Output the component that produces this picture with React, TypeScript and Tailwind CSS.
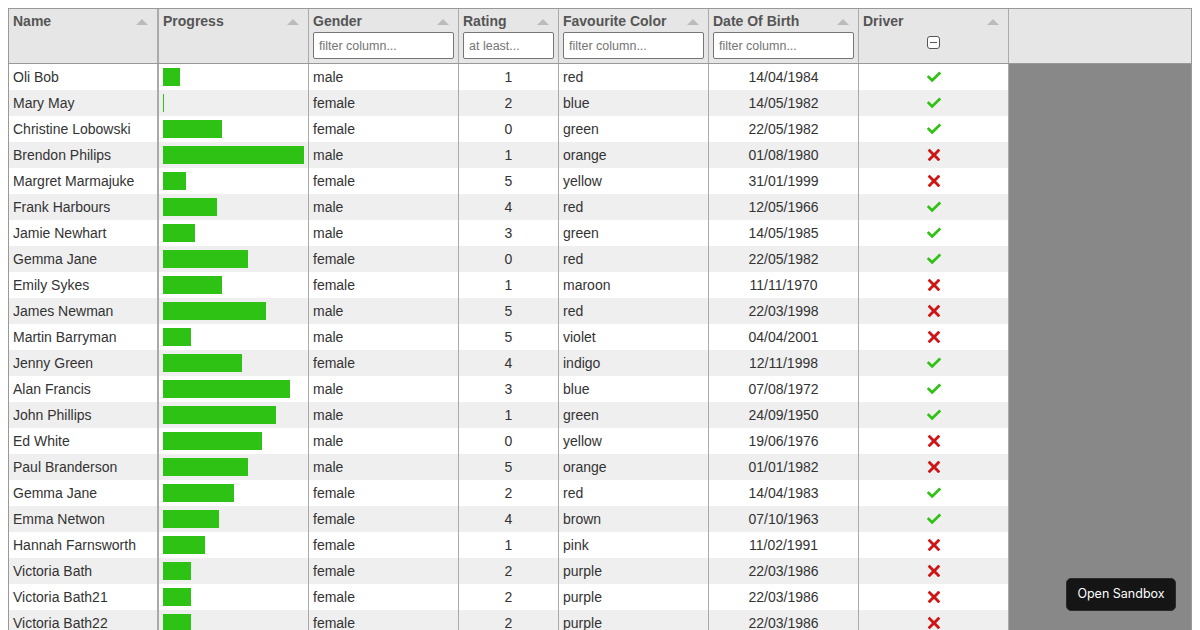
import React from 'react';

type Person = {
  name: string;
  progress: number;
  gender: string;
  rating: number;
  col: string;
  dob: string;
  car: boolean;
};

const people: Person[] = [
  { name: 'Oli Bob', progress: 12, gender: 'male', rating: 1, col: 'red', dob: '14/04/1984', car: true },
  { name: 'Mary May', progress: 1, gender: 'female', rating: 2, col: 'blue', dob: '14/05/1982', car: true },
  { name: 'Christine Lobowski', progress: 42, gender: 'female', rating: 0, col: 'green', dob: '22/05/1982', car: true },
  { name: 'Brendon Philips', progress: 100, gender: 'male', rating: 1, col: 'orange', dob: '01/08/1980', car: false },
  { name: 'Margret Marmajuke', progress: 16, gender: 'female', rating: 5, col: 'yellow', dob: '31/01/1999', car: false },
  { name: 'Frank Harbours', progress: 38, gender: 'male', rating: 4, col: 'red', dob: '12/05/1966', car: true },
  { name: 'Jamie Newhart', progress: 23, gender: 'male', rating: 3, col: 'green', dob: '14/05/1985', car: true },
  { name: 'Gemma Jane', progress: 60, gender: 'female', rating: 0, col: 'red', dob: '22/05/1982', car: true },
  { name: 'Emily Sykes', progress: 42, gender: 'female', rating: 1, col: 'maroon', dob: '11/11/1970', car: false },
  { name: 'James Newman', progress: 73, gender: 'male', rating: 5, col: 'red', dob: '22/03/1998', car: false },
  { name: 'Martin Barryman', progress: 20, gender: 'male', rating: 5, col: 'violet', dob: '04/04/2001', car: false },
  { name: 'Jenny Green', progress: 56, gender: 'female', rating: 4, col: 'indigo', dob: '12/11/1998', car: true },
  { name: 'Alan Francis', progress: 90, gender: 'male', rating: 3, col: 'blue', dob: '07/08/1972', car: true },
  { name: 'John Phillips', progress: 80, gender: 'male', rating: 1, col: 'green', dob: '24/09/1950', car: true },
  { name: 'Ed White', progress: 70, gender: 'male', rating: 0, col: 'yellow', dob: '19/06/1976', car: false },
  { name: 'Paul Branderson', progress: 60, gender: 'male', rating: 5, col: 'orange', dob: '01/01/1982', car: false },
  { name: 'Gemma Jane', progress: 50, gender: 'female', rating: 2, col: 'red', dob: '14/04/1983', car: true },
  { name: 'Emma Netwon', progress: 40, gender: 'female', rating: 4, col: 'brown', dob: '07/10/1963', car: true },
  { name: 'Hannah Farnsworth', progress: 30, gender: 'female', rating: 1, col: 'pink', dob: '11/02/1991', car: false },
  { name: 'Victoria Bath', progress: 20, gender: 'female', rating: 2, col: 'purple', dob: '22/03/1986', car: false },
  { name: 'Victoria Bath21', progress: 20, gender: 'female', rating: 2, col: 'purple', dob: '22/03/1986', car: false },
  { name: 'Victoria Bath22', progress: 20, gender: 'female', rating: 2, col: 'purple', dob: '22/03/1986', car: false },
];

function Tick() {
  return (
    <svg width="14" height="14" viewBox="0 0 24 24">
      <path
        fill="#2DC214"
        fillRule="evenodd"
        d="M21.652,3.211c-0.293-0.295-0.77-0.295-1.061,0L9.41,14.34c-0.293,0.297-0.771,0.297-1.062,0L3.449,9.351C3.304,9.203,3.114,9.13,2.923,9.129C2.73,9.128,2.534,9.201,2.387,9.351l-2.165,1.946C0.078,11.445,0,11.63,0,11.823c0,0.194,0.078,0.397,0.223,0.544l4.94,5.184c0.292,0.296,0.771,0.776,1.062,1.07l2.124,2.141c0.292,0.293,0.769,0.293,1.062,0l14.366-14.34c0.293-0.294,0.293-0.777,0-1.071L21.652,3.211z"
      />
    </svg>
  );
}

function Cross() {
  return (
    <svg width="14" height="14" viewBox="0 0 24 24">
      <path
        fill="#CE1515"
        d="M22.245,4.015c0.313,0.313,0.313,0.826,0,1.139l-6.276,6.27c-0.313,0.312-0.313,0.826,0,1.14l6.273,6.272c0.313,0.313,0.313,0.826,0,1.14l-2.285,2.277c-0.314,0.312-0.828,0.312-1.142,0l-6.271-6.271c-0.313-0.313-0.828-0.313-1.141,0l-6.276,6.267c-0.313,0.313-0.828,0.313-1.141,0l-2.282-2.28c-0.313-0.313-0.313-0.826,0-1.14l6.278-6.269c0.313-0.312,0.313-0.826,0-1.14L1.709,5.147c-0.314-0.313-0.314-0.827,0-1.14l2.284-2.278C4.308,1.417,4.821,1.417,5.135,1.73L11.405,8c0.314,0.314,0.828,0.314,1.141,0.001l6.276-6.267c0.312-0.312,0.826-0.312,1.141,0L22.245,4.015z"
      />
    </svg>
  );
}

function SortArrow() {
  return (
    <span className="absolute right-[9px] top-[10px] h-0 w-0 border-x-[6px] border-b-[6px] border-x-transparent border-b-[#bbb]" />
  );
}

function HeaderCol({
  title,
  width,
  frozen,
  filter,
}: {
  title: string;
  width: string;
  frozen?: boolean;
  filter?: React.ReactNode;
}) {
  return (
    <div
      className={`relative flex flex-col px-1 pt-1 pb-1 ${width} ${
        frozen ? 'border-r-2 border-[#aaa]' : 'border-r border-[#aaa]'
      }`}
    >
      <div className="h-[17px] leading-[17px] pr-6 font-bold text-[#555]">{title}</div>
      <SortArrow />
      <div className="mt-[2px]">{filter}</div>
    </div>
  );
}

function FilterInput({ placeholder }: { placeholder: string }) {
  return (
    <input
      readOnly
      placeholder={placeholder}
      className="block h-[27px] w-full rounded-[2px] border border-[#767676] bg-white px-[5px] text-[12.5px] text-[#333] placeholder:text-[#757575] outline-none"
    />
  );
}

export default function App() {
  return (
    <div
      className="relative h-[630px] overflow-hidden bg-white text-[14px] text-[#333]"
      style={{ fontFamily: '"Liberation Sans", Arial, sans-serif' }}
    >
      <div className="ml-2 mt-2 w-[1184px] border border-[#999] bg-[#888]">
        <div className="flex h-[55px] border-b border-[#999] bg-[#e6e6e6]">
          <HeaderCol title="Name" width="w-[150px]" frozen />
          <HeaderCol title="Progress" width="w-[150px]" />
          <HeaderCol title="Gender" width="w-[150px]" filter={<FilterInput placeholder="filter column..." />} />
          <HeaderCol title="Rating" width="w-[100px]" filter={<FilterInput placeholder="at least..." />} />
          <HeaderCol title="Favourite Color" width="w-[150px]" filter={<FilterInput placeholder="filter column..." />} />
          <HeaderCol title="Date Of Birth" width="w-[150px]" filter={<FilterInput placeholder="filter column..." />} />
          <HeaderCol
            title="Driver"
            width="w-[150px]"
            filter={
              <div className="flex h-[27px] items-start justify-center pt-[4px]">
                <span className="flex h-[13px] w-[13px] items-center justify-center rounded-[3px] border border-[#555] bg-white">
                  <span className="h-[1.5px] w-[7px] bg-[#555]" />
                </span>
              </div>
            }
          />
          <div className="flex-1" />
        </div>
        <div className="w-[1000px]">
          {people.map((p, i) => (
            <div
              key={p.name + i}
              className={`flex h-[26px] leading-[18px] ${i % 2 === 1 ? 'bg-[#efefef]' : 'bg-white'}`}
            >
              <div className="w-[150px] truncate border-r-2 border-[#aaa] p-1">{p.name}</div>
              <div className="w-[150px] border-r border-[#aaa] p-1">
                <div className="h-[18px] bg-[#2DC214]" style={{ width: `${p.progress}%` }} />
              </div>
              <div className="w-[150px] border-r border-[#aaa] p-1">{p.gender}</div>
              <div className="w-[100px] border-r border-[#aaa] p-1 text-center">{p.rating}</div>
              <div className="w-[150px] border-r border-[#aaa] p-1">{p.col}</div>
              <div className="w-[150px] border-r border-[#aaa] p-1 text-center">{p.dob}</div>
              <div className="flex w-[150px] items-center justify-center border-r border-[#aaa] p-1">
                {p.car ? <Tick /> : <Cross />}
              </div>
            </div>
          ))}
        </div>
      </div>
      <button
        className="absolute bottom-[19px] right-[24px] flex h-[33px] w-[110px] items-center justify-center rounded-[5px] border border-[#2a2a2a] bg-[#151515] text-[12.5px] text-white"
        style={{ fontFamily: 'Inter, sans-serif' }}
      >
        Open Sandbox
      </button>
    </div>
  );
}
